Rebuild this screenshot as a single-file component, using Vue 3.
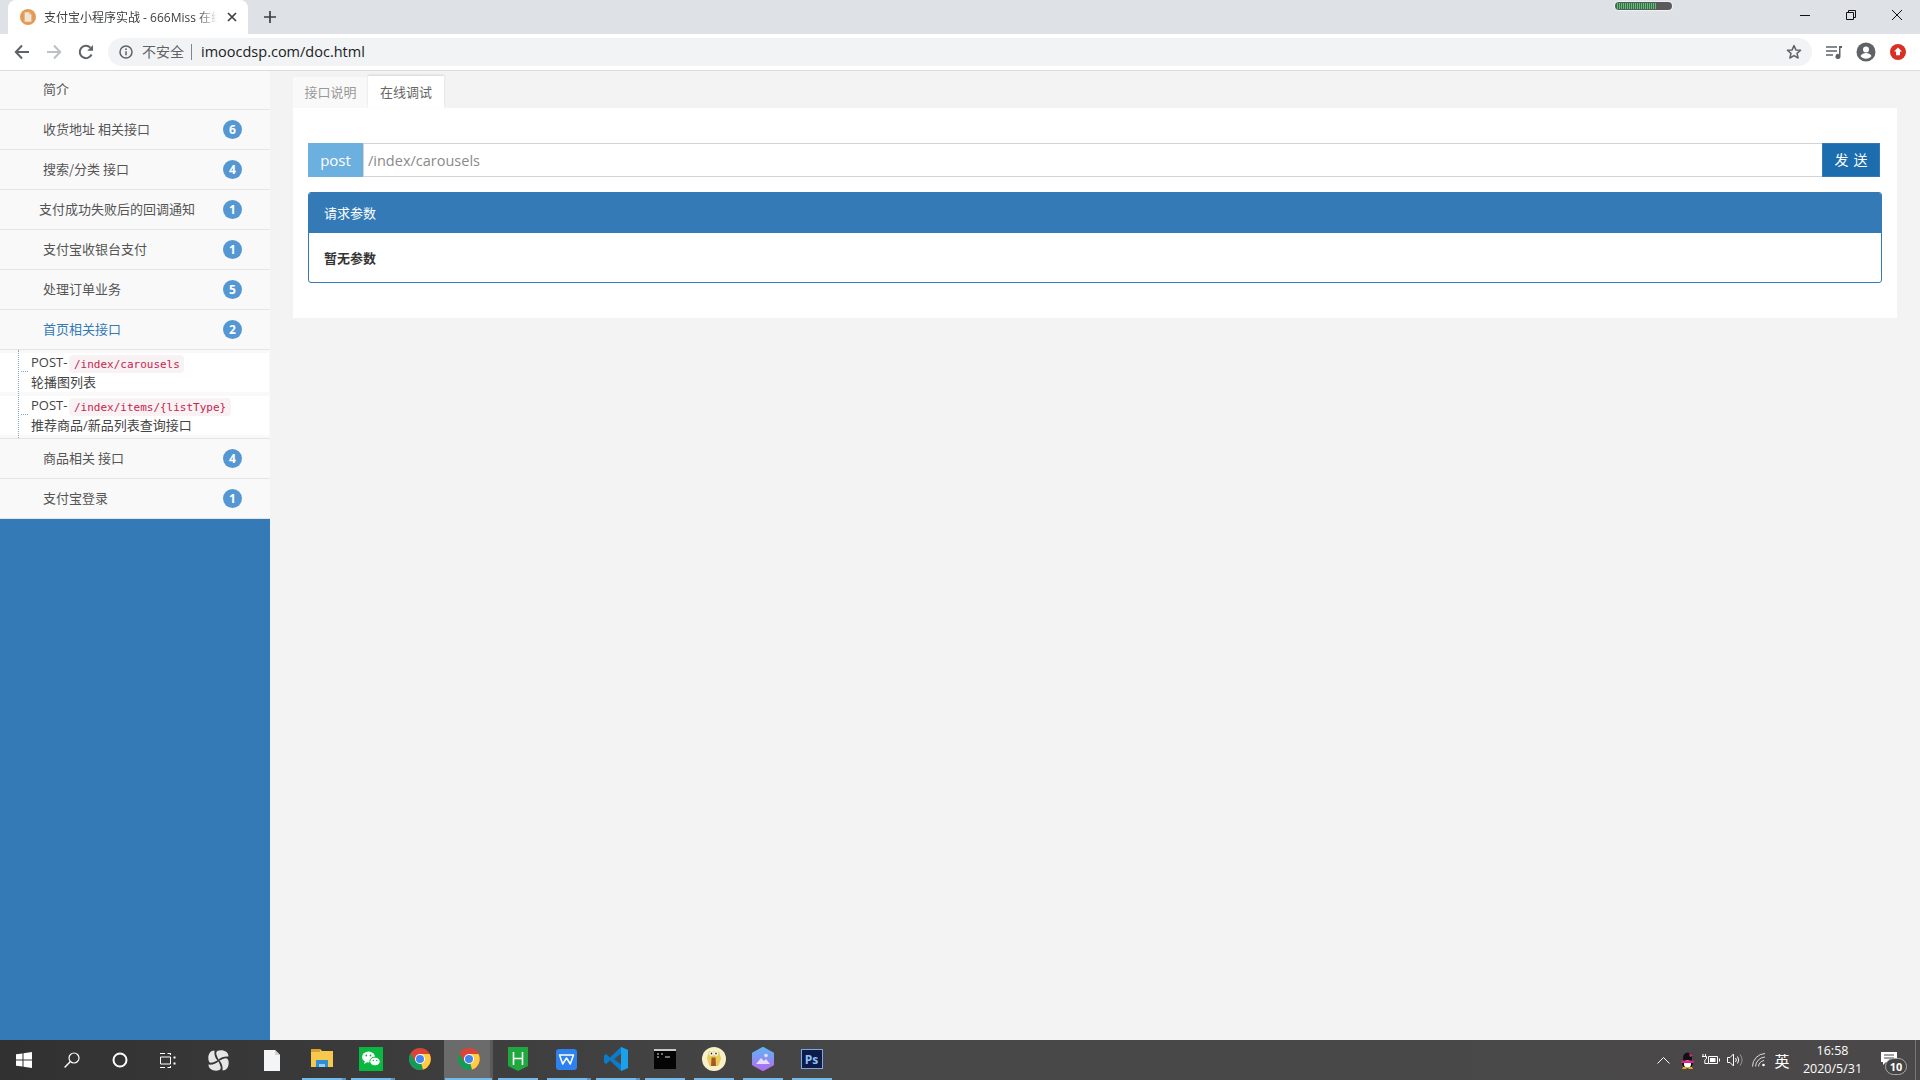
<script setup>
const groupsBefore = [
  { name: '简介' },
  { name: '收货地址 相关接口', count: 6 },
  { name: '搜索/分类 接口', count: 4 },
  { name: '支付成功失败后的回调通知', count: 1, wide: true },
  { name: '支付宝收银台支付', count: 1 },
  { name: '处理订单业务', count: 5 },
  { name: '首页相关接口', count: 2, active: true },
]
const subItems = [
  { path: '/index/carousels', desc: '轮播图列表' },
  { path: '/index/items/{listType}', desc: '推荐商品/新品列表查询接口' },
]
const groupsAfter = [
  { name: '商品相关 接口', count: 4 },
  { name: '支付宝登录', count: 1 },
]
const meterBars = Array.from({ length: 20 }, (_, i) => i)
const petalAngles = [0, 90, 180, 270]
</script>

<template>
  <div class="screen">
    <header class="browser">
      <div class="tabstrip">
        <div class="tab">
          <span class="favicon">
            <svg width="16" height="16" viewBox="0 0 16 16"><circle cx="8" cy="8" r="8" fill="#e59a55"/><path d="M4.600 3.200h4.600l2.200 2.200v7.400H4.600z" fill="#efe6d6"/><path d="M9.200 3.200v2.200h2.200z" fill="#cdbfa6"/></svg>
          </span>
          <span class="tab-title">支付宝小程序实战 - 666Miss 在线</span>
          <svg class="tab-close" width="10" height="10" viewBox="0 0 10 10"><path d="M1 1l8 8M9 1l-8 8" stroke="#3c4043" stroke-width="1.700" fill="none"/></svg>
        </div>
        <svg class="newtab" width="14" height="14" viewBox="0 0 14 14"><path d="M7 1v12M1 7h12" stroke="#3c4043" stroke-width="1.700" fill="none"/></svg>
        <div class="winctrl">
          <span class="wbtn"><svg width="12" height="12" viewBox="0 0 12 12"><path d="M1 6.500h10" stroke="#111" stroke-width="1" fill="none"/></svg></span>
          <span class="wbtn"><svg width="12" height="12" viewBox="0 0 12 12"><path d="M1.500 3.500h7v7h-7zM3.500 3.500v-2h7v7h-2" stroke="#111" stroke-width="1" fill="none"/></svg></span>
          <span class="wbtn"><svg width="12" height="12" viewBox="0 0 12 12"><path d="M1 1l10 10M11 1L1 11" stroke="#111" stroke-width="1" fill="none"/></svg></span>
        </div>
        <div class="meter"><i v-for="b in meterBars" :key="b"></i></div>
      </div>
      <div class="toolbar">
        <span class="nav"><svg width="16" height="16" viewBox="0 0 16 16"><path d="M15 8H2M8 1.500L1.800 8 8 14.500" stroke="#5f6368" stroke-width="2" fill="none"/></svg></span>
        <span class="nav"><svg width="16" height="16" viewBox="0 0 16 16"><path d="M1 8h13M8 1.500L14.200 8 8 14.500" stroke="#bdc1c6" stroke-width="2" fill="none"/></svg></span>
        <span class="nav"><svg width="16" height="16" viewBox="0 0 16 16"><path d="M13.600 10.500A6.200 6.200 0 1 1 12.400 3.600" stroke="#5f6368" stroke-width="2" fill="none"/><path d="M15 1v5.800H9.200z" fill="#5f6368"/></svg></span>
        <div class="omnibox">
          <svg class="info" width="14" height="14" viewBox="0 0 14 14"><circle cx="7" cy="7" r="6" stroke="#5f6368" stroke-width="1.500" fill="none"/><path d="M7 6.200v4" stroke="#5f6368" stroke-width="1.500"/><circle cx="7" cy="4.200" r="0.900" fill="#5f6368"/></svg>
          <span class="insecure">不安全</span>
          <span class="omni-sep"></span>
          <span class="url">imoocdsp.com/doc.html</span>
          <svg class="star" width="16" height="16" viewBox="0 0 16 16"><path d="M8 1.600l1.900 4.300 4.700.4-3.600 3.100 1.100 4.600L8 11.600 3.900 14l1.100-4.600L1.400 6.300l4.700-.4z" stroke="#5f6368" stroke-width="1.500" fill="none" stroke-linejoin="round"/></svg>
        </div>
        <span class="ext ext-queue"><svg width="16" height="14" viewBox="0 0 16 14"><path d="M0 2h11M0 6h11M0 10h7" stroke="#5f6368" stroke-width="1.500" fill="none"/><path d="M13 1h3v2h-1.500v8.500a2.500 2.500 0 1 1-1.500-2.300z" fill="#5f6368"/></svg></span>
        <span class="ext"><svg width="20" height="20" viewBox="0 0 20 20"><circle cx="10" cy="10" r="9.500" fill="#5f6368"/><circle cx="10" cy="7.500" r="3" fill="#fff"/><path d="M4.500 14c1-2 3.300-3 5.500-3s4.500 1 5.500 3c-1.300 1.700-3.300 2.700-5.500 2.700S5.800 15.700 4.500 14z" fill="#fff"/></svg></span>
        <span class="ext"><svg width="16" height="16" viewBox="0 0 16 16"><circle cx="8" cy="8" r="8" fill="#d93025"/><path d="M8 3.400l4 4.200H10v3.600H6V7.600H4z" fill="#fff"/></svg></span>
      </div>
    </header>

    <div class="page">
      <aside class="sidebar">
        <div v-for="g in groupsBefore" :key="g.name" class="group" :class="{ active: g.active }">
          <span class="group-name" :class="{ wide: g.wide }">{{ g.name }}</span>
          <span v-if="g.count" class="badge">{{ g.count }}</span>
        </div>
        <div class="subs">
          <div v-for="s in subItems" :key="s.path" class="sub">
            <div class="sub-line">POST-<code class="path">{{ s.path }}</code></div>
            <div class="sub-line">{{ s.desc }}</div>
          </div>
        </div>
        <div v-for="g in groupsAfter" :key="g.name" class="group">
          <span class="group-name">{{ g.name }}</span>
          <span class="badge">{{ g.count }}</span>
        </div>
      </aside>

      <main class="content">
        <div class="tabs">
          <span class="dtab">接口说明</span>
          <span class="dtab current">在线调试</span>
        </div>
        <section class="panel">
          <div class="request">
            <span class="method">post</span>
            <span class="address">/index/carousels</span>
            <button class="send">发 送</button>
          </div>
          <div class="params">
            <div class="params-head"><span class="head-text">请求参数</span></div>
            <div class="params-body">暂无参数</div>
          </div>
        </section>
      </main>
    </div>

    <footer class="taskbar">
      <div class="sys">
        <span class="ti"><svg width="16" height="16" viewBox="0 0 16 16"><path d="M0 2.300L6.500 1.400V7.500H0zM7.500 1.200L16 0V7.500H7.500zM0 8.500H6.500V14.600L0 13.700zM7.500 8.500H16V16L7.500 14.800z" fill="#fff"/></svg></span>
        <span class="ti"><svg width="16" height="16" viewBox="0 0 16 16"><circle cx="10" cy="6" r="5" stroke="#fff" stroke-width="1.200" fill="none"/><path d="M6.400 9.600L.6 15.400" stroke="#fff" stroke-width="1.400"/></svg></span>
        <span class="ti"><svg width="16" height="16" viewBox="0 0 16 16"><circle cx="8" cy="8" r="6.500" stroke="#fff" stroke-width="2" fill="none"/></svg></span>
        <span class="ti"><svg width="16" height="15" viewBox="0 0 16 15"><path d="M0 .5h5M7.500 .5h3M0 14.500h5M7.500 14.500h3M.5 4h10v7H.5z" stroke="#fff" stroke-width="1" fill="none"/><path d="M13.500 3.500h2v2h-2zM13.500 9.500h2v2h-2z" fill="#fff"/><path d="M10.500 0v2M10.500 13v2" stroke="#fff" stroke-width="1"/></svg></span>
        <span class="ti fan"><svg width="21" height="21" viewBox="0 0 21 21"><path v-for="a in petalAngles" :key="a" d="M10.500 9.500C9.500 7 8.200 5 8.200 3C8.200 1 10.500 .3 13 .3C17 .3 20.500 2.500 20.500 6.500C17 6 13 7 10.500 9.500z" fill="#e6e6e6" :transform="`rotate(${a} 10.500 10.500)`"/></svg></span>
        <span class="ti file"><svg width="16" height="21" viewBox="0 0 16 21"><path d="M0 0h11l5 5v16H0z" fill="#f4f5f7"/><path d="M11 0v5h5z" fill="#cfd3d8"/></svg></span>
      </div>

      <div class="apps">
        <span class="app on split"><svg width="22" height="20" viewBox="0 0 22 20"><path d="M0 0h9l2 2h11v16H0z" fill="#f6c94e"/><path d="M0 0h9v3H0z" fill="#d9a22e"/><path d="M5 11h12v7h-3v-3H8v3H5z" fill="#2e8fd6"/><path d="M8 15h6v3H8z" fill="#8fd0f5"/></svg></span>
        <span class="app on split"><svg width="24" height="24" viewBox="0 0 24 24"><rect width="24" height="24" fill="#09b83e"/><ellipse cx="9.500" cy="10" rx="6.500" ry="5.400" fill="#fff"/><path d="M6 14l-1 3 3.500-2z" fill="#fff"/><ellipse cx="16" cy="14.500" rx="5.200" ry="4.400" fill="#fff" stroke="#09b83e" stroke-width="1"/><circle cx="7.300" cy="8.500" r=".9" fill="#09b83e"/><circle cx="11.500" cy="8.500" r=".9" fill="#09b83e"/><circle cx="14.300" cy="13.500" r=".7" fill="#09b83e"/><circle cx="17.700" cy="13.500" r=".7" fill="#09b83e"/></svg></span>
        <span class="app">
          <svg width="22" height="22" viewBox="0 0 22 22"><circle cx="11" cy="11" r="11" fill="#db4437"/><path d="M11 11L1.500 16.500A11 11 0 0 0 11 22c1 0 2-.1 3-.4z" fill="#0f9d58"/><path d="M11 6h9.500A11 11 0 0 1 14 21.600L11 11z" fill="#ffcd40"/><path d="M1.500 5.500L6.300 13.700 1.500 16.500A11 11 0 0 1 1.500 5.500z" fill="#0f9d58"/><circle cx="11" cy="11" r="5" fill="#fff"/><circle cx="11" cy="11" r="4" fill="#4285f4"/></svg>
        </span>
        <span class="app on current-app">
          <svg width="22" height="22" viewBox="0 0 22 22"><circle cx="11" cy="11" r="11" fill="#db4437"/><path d="M11 11L1.500 16.500A11 11 0 0 0 11 22c1 0 2-.1 3-.4z" fill="#0f9d58"/><path d="M11 6h9.500A11 11 0 0 1 14 21.600L11 11z" fill="#ffcd40"/><path d="M1.500 5.500L6.300 13.700 1.500 16.500A11 11 0 0 1 1.500 5.500z" fill="#0f9d58"/><circle cx="11" cy="11" r="5" fill="#fff"/><circle cx="11" cy="11" r="4" fill="#4285f4"/></svg>
        </span>
        <span class="app on"><svg width="20" height="24" viewBox="0 0 20 24"><path d="M0 0h20v19l-10 5-10-5z" fill="#1fa83e"/><path d="M5.500 5v13M14.500 5v13M5.500 11.500h9" stroke="#fff" stroke-width="1.600" fill="none"/></svg></span>
        <span class="app on split"><svg width="21" height="21" viewBox="0 0 21 21"><rect width="21" height="21" rx="3" fill="#2d82ef"/><path d="M3.500 6h14l-3.200 9-3.800-6-3.800 6z" stroke="#fff" stroke-width="1.500" fill="none" stroke-linejoin="round"/></svg></span>
        <span class="app on split"><svg width="24" height="24" viewBox="0 0 24 24"><path d="M17 0l7 3v18l-7 3-11-10.500L2 17l-2-1.500v-7L2 7l4 3.500z" fill="#0a7ccb"/><path d="M17 0l7 3v18l-7 3z" fill="#1ba0ea"/><path d="M17 6.500v11L10 12z" fill="#484848"/></svg></span>
        <span class="app on"><svg width="22" height="20" viewBox="0 0 22 20"><rect width="22" height="20" fill="#050505"/><rect width="22" height="2" fill="#c9c9c9"/><path d="M3 5h2M3 8h2M7 5h2M11 8h5" stroke="#ddd" stroke-width="1.200"/></svg></span>
        <span class="app on"><svg width="24" height="24" viewBox="0 0 24 24"><circle cx="12" cy="12" r="12" fill="#f8f0c8"/><path d="M7 4l10 .5 2 7-2.500 7.500h-9L5 11.500z" fill="#e8cc58"/><circle cx="9.500" cy="6.500" r="2.200" fill="#fff"/><circle cx="14" cy="6.500" r="2.200" fill="#fff"/><circle cx="9.500" cy="6.500" r=".9" fill="#333"/><circle cx="14" cy="6.500" r=".9" fill="#333"/><path d="M9.500 10.500h4l.5 8.500h-5z" fill="#a8562c"/></svg></span>
        <span class="app on"><svg width="22" height="24" viewBox="0 0 22 24"><defs><linearGradient id="photo" x1="0" y1="0" x2="0" y2="1"><stop offset="0" stop-color="#5fb4f5"/><stop offset="1" stop-color="#b26cf0"/></linearGradient></defs><path d="M11 1l10 5.500v11L11 23 1 17.500v-11z" fill="url(#photo)" stroke="url(#photo)" stroke-width="2" stroke-linejoin="round"/><circle cx="14" cy="8.500" r="1.800" fill="#e6ddff"/><path d="M4 17l5-6 3 3 2-2 4 5z" fill="#e6ddff"/></svg></span>
        <span class="app on"><span class="ps">Ps</span></span>
      </div>

      <div class="tray">
        <span class="tr w24"><svg width="13" height="8" viewBox="0 0 13 8"><path d="M.5 7.500l6-6 6 6" stroke="#fff" stroke-width="1" fill="none"/></svg></span>
        <span class="tr w24"><svg width="15" height="17" viewBox="0 0 15 17"><ellipse cx="7.500" cy="6" rx="4.500" ry="5.500" fill="#111"/><ellipse cx="7.500" cy="11" rx="5.500" ry="5" fill="#111"/><ellipse cx="7.500" cy="12" rx="3.500" ry="3.800" fill="#fff"/><path d="M1.500 8.500h12v2.500h-12z" fill="#e8208c"/><path d="M9 1.500l4 2-3 1.500z" fill="#e8208c"/><path d="M3 15h3.500v2H2zM8.500 15H12l1 2H8.500z" fill="#f0a30a"/></svg></span>
        <span class="tr w24"><svg width="18" height="12" viewBox="0 0 18 12"><path d="M6.500 2.500h9v7h-9z" stroke="#fff" stroke-width="1" fill="none"/><path d="M8 4h5.500v4H8zM17 4.500h1v3h-1z" fill="#fff"/><path d="M1 0v2.500M3.500 0v2.500M0 2.500h4.500v2L2.800 6v3.500H6" stroke="#fff" stroke-width="1" fill="none"/></svg></span>
        <span class="tr w24"><svg width="16" height="14" viewBox="0 0 16 14"><path d="M.5 4.500h2.500L6.500 1v12L3 9.500H.5z" stroke="#fff" stroke-width="1" fill="none"/><path d="M8.500 5a3 3 0 0 1 0 4M10.500 3.500a6 6 0 0 1 0 7" stroke="#fff" stroke-width="1" fill="none"/><path d="M13 1.500a9 9 0 0 1 0 11" stroke="#999" stroke-width="1" fill="none"/></svg></span>
        <span class="tr w24"><svg width="14" height="14" viewBox="0 0 14 14"><path d="M.5 13.500A13 13 0 0 1 13 .5M3.500 13.500A10 10 0 0 1 13 4M6.500 13.500A7 7 0 0 1 12 7.500" stroke="#ddd" stroke-width="1" fill="none"/><circle cx="11.500" cy="12" r="1.300" fill="#fff"/></svg></span>
        <span class="tr ime">英</span>
        <span class="clock"><span>16:58</span><span>2020/5/31</span></span>
        <span class="notify">
          <svg width="16" height="13" viewBox="0 0 16 13"><path d="M0 0h16v10H5l-3 3v-3H0z" fill="#fff"/><path d="M3 3h10M3 6h10" stroke="#444" stroke-width="1"/></svg>
          <span class="notify-count">10</span>
        </span>
        <span class="desktop"></span>
      </div>
    </footer>
  </div>
</template>

<style scoped>
.screen {
  width: 1920px;
  height: 1080px;
  display: flex;
  flex-direction: column;
  overflow: hidden;
  font-family: "Noto Sans CJK SC", "Noto Sans", sans-serif;
  background: #f3f3f3;
}
.browser { flex: none; }
.tabstrip {
  height: 34px;
  background: #dee1e6;
  display: flex;
  align-items: flex-end;
  padding-left: 8px;
  position: relative;
}
.tab {
  width: 240px;
  height: 34px;
  background: #fff;
  border-radius: 8px 8px 0 0;
  display: flex;
  align-items: center;
  padding: 0 10px 0 12px;
  box-sizing: border-box;
}
.favicon { width: 16px; height: 16px; margin-right: 8px; flex: none; }
.favicon svg { display: block; }
.tab-title {
  width: 174px;
  overflow: hidden;
  white-space: nowrap;
  font-family: "Open Sans", "Noto Sans CJK SC", sans-serif;
  font-size: 12px;
  color: #3c4043;
  -webkit-mask-image: linear-gradient(to right, #000 88%, transparent 100%);
  mask-image: linear-gradient(to right, #000 88%, transparent 100%);
}
.tab-close { margin-left: 9px; flex: none; }
.newtab { margin: 0 0 10px 15px; flex: none; }
.winctrl { margin-left: auto; display: flex; height: 34px; align-self: flex-start; }
.wbtn { width: 46px; height: 29px; display: flex; align-items: center; justify-content: center; }
.meter {
  position: absolute;
  left: 1615px;
  top: 2px;
  width: 57px;
  height: 8px;
  box-sizing: border-box;
  border-radius: 4px;
  background: #5a5a5a;
  box-shadow: 0 0 1px 1px rgba(255, 255, 255, 0.6);
  display: flex;
  gap: 1px;
  padding: 1px 2px;
}
.meter i { width: 1px; background: #44d06a; }
.toolbar {
  height: 37px;
  box-sizing: border-box;
  background: #fff;
  border-bottom: 1px solid #dadce0;
  display: flex;
  align-items: flex-start;
  padding: 4px 0 0 6px;
}
.nav { width: 32px; height: 28px; display: flex; align-items: center; justify-content: center; flex: none; }
.omnibox {
  width: 1704px;
  margin-left: 6px;
  height: 28px;
  box-sizing: border-box;
  border-radius: 14px;
  background: #f1f3f4;
  display: flex;
  align-items: center;
  padding-left: 11px;
  flex: none;
}
.info { flex: none; }
.insecure { margin-left: 9px; font-size: 14px; color: #5f6368; padding-bottom: 2px; }
.omni-sep { width: 1px; height: 16px; background: #80868b; margin: 0 9px 0 7px; }
.url { font-family: "Open Sans", "Noto Sans", sans-serif; font-size: 14.5px; color: #202124; padding-bottom: 2px; }
.star { margin-left: auto; margin-right: 10px; flex: none; }
.ext { width: 32px; height: 28px; display: flex; align-items: center; justify-content: center; flex: none; }
.ext-queue { margin-left: 6px; }

.page { flex: 1; display: flex; min-height: 0; }
.sidebar { width: 270px; flex: none; background: #337ab7; }
.group {
  height: 40px;
  box-sizing: border-box;
  background: #f9f9f9;
  border-bottom: 1px solid #e5e5e5;
  display: flex;
  align-items: center;
  padding: 0 28px 0 43px;
  font-size: 13px;
  color: #555;
}
.group:first-child { height: 39px; }
.group.active { color: #337ab7; }
.group-name { padding-bottom: 3px; }
.group-name.wide { margin-left: -4px; }
.badge {
  margin-left: auto;
  width: 19px;
  height: 19px;
  border-radius: 50%;
  background: #5497d3;
  color: #fff;
  font-family: "Open Sans", sans-serif;
  font-size: 12px;
  font-weight: 700;
  display: flex;
  align-items: center;
  justify-content: center;
}
.subs {
  position: relative;
  height: 89px;
  box-sizing: border-box;
  background: #f9f9f9;
  padding-top: 3px;
  border-bottom: 1px solid #e5e5e5;
  display: flex;
  flex-direction: column;
  gap: 4px;
}
.subs::after {
  content: "";
  position: absolute;
  z-index: 1;
  left: 18px;
  top: 0;
  bottom: 0;
  border-left: 1px dotted #7fa8cc;
}
.sub {
  position: relative;
  height: 39px;
  width: 269px;
  box-sizing: border-box;
  background: #fff;
  padding-left: 31px;
  font-family: "Open Sans", "Noto Sans CJK SC", sans-serif;
  font-size: 13px;
  color: #444;
}
.sub::before {
  content: "";
  position: absolute;
  left: 21px;
  top: 18px;
  width: 7px;
  border-top: 1px dotted #7fa8cc;
}
.sub-line { height: 20px; line-height: 19px; white-space: nowrap; }
.path {
  font-family: "DejaVu Sans Mono", monospace;
  font-size: 11px;
  color: #c7254e;
  background: #f9f2f4;
  border-radius: 4px;
  padding: 2.5px 4.5px;
  margin-left: 2px;
}

.content { flex: 1; padding: 5px 23px 0; min-width: 0; }
.tabs { display: flex; align-items: flex-end; height: 32px; }
.dtab {
  height: 31px;
  width: 75px;
  box-sizing: border-box;
  padding-bottom: 2px;
  background: #f9f9f9;
  color: #999;
  font-size: 13px;
  display: flex;
  align-items: center;
  justify-content: center;
}
.dtab.current {
  height: 32px;
  width: 76px;
  background: #fff;
  color: #666;
  box-shadow: 0 -1px 2px rgba(0, 0, 0, 0.12);
}
.panel { background: #fff; padding: 35px 15px; height: 210px; box-sizing: border-box; }
.request { display: flex; height: 34px; margin-right: 2px; }
.method {
  width: 55px;
  background: #6cb0e0;
  color: #fff;
  font-family: "Open Sans", sans-serif;
  font-size: 15px;
  font-weight: 500;
  display: flex;
  align-items: center;
  justify-content: center;
  flex: none;
}
.address {
  flex: 1;
  box-sizing: border-box;
  border: 1px solid #d3d3d3;
  border-width: 1px 0 1px 1px;
  padding-left: 4px;
  font-family: "Open Sans", sans-serif;
  font-size: 14.5px;
  color: #8a8a8a;
  display: flex;
  align-items: center;
}
.send {
  width: 58px;
  box-sizing: border-box;
  border: 1px solid #337ab7;
  background: #1b6dad;
  color: #fff;
  font-family: inherit;
  font-size: 14px;
  word-spacing: 2px;
  padding: 0 0 2px;
}
.params { margin-top: 15px; border: 1px solid #337ab7; border-radius: 3px; overflow: hidden; }
.params-head {
  height: 40px;
  background: #337ab7;
  color: #fff;
  font-size: 13px;
  display: flex;
  align-items: center;
  padding-left: 15px;
}
.head-text { padding-bottom: 2px; }
.params-body {
  height: 49px;
  box-sizing: border-box;
  padding: 0 0 1px 15px;
  font-size: 13px;
  font-weight: 700;
  color: #333;
  display: flex;
  align-items: center;
}

.taskbar {
  height: 40px;
  flex: none;
  display: flex;
  background: linear-gradient(to right, #313131 0%, #484848 45%, #4a4848 100%);
  color: #fff;
}
.sys { display: flex; flex: none; }
.ti { width: 48px; height: 40px; display: flex; align-items: center; justify-content: center; box-sizing: border-box; }
.ti.fan { width: 52px; }
.ti.file { width: 53px; padding-left: 2px; }
.apps { display: flex; flex: none; }
.app {
  position: relative;
  width: 49px;
  height: 40px;
  display: flex;
  align-items: center;
  justify-content: center;
  box-sizing: border-box;
  padding-bottom: 2px;
}
.app.on::after {
  content: "";
  position: absolute;
  left: 5px;
  width: 40px;
  bottom: 0;
  height: 2px;
  background: #76b9ed;
}
.app.split::before {
  content: "";
  position: absolute;
  left: 45px;
  width: 4px;
  bottom: 0;
  height: 2px;
  background: #5b93c0;
  z-index: 1;
}
.current-app { background: #6b6b6b; border-right: 3px solid #5a5a5a; padding-left: 3px; }
.current-app.on::after { left: 1px; width: 47px; }
.ps {
  width: 22px;
  height: 20px;
  box-sizing: border-box;
  background: #0d1a4a;
  border: 1px solid #7fa8e0;
  color: #8fc1f2;
  font-family: "Open Sans", sans-serif;
  font-size: 12px;
  font-weight: 700;
  display: flex;
  align-items: center;
  justify-content: center;
}
.tray { margin-left: auto; display: flex; align-items: center; height: 40px; }
.tr { height: 40px; display: flex; align-items: center; justify-content: center; }
.w24 { width: 24px; }
.ime { width: 22px; font-size: 15px; }
.clock {
  width: 83px;
  display: flex;
  flex-direction: column;
  align-items: center;
  font-family: "Open Sans", sans-serif;
  font-size: 12.500px;
  line-height: 18px;
  margin: 0 2px 0 -2px;
}
.notify {
  position: relative;
  width: 39px;
  height: 40px;
  display: flex;
  align-items: center;
  padding: 0 0 4px 5px;
  box-sizing: border-box;
}
.notify-count {
  position: absolute;
  top: 18px;
  left: 9px;
  height: 17px;
  width: 22px;
  box-sizing: border-box;
  border: 1px solid #aaa;
  border-radius: 9px;
  background: #444;
  font-family: "Open Sans", sans-serif;
  font-size: 11px;
  font-weight: 700;
  line-height: 15px;
  text-align: center;
}
.desktop { width: 5px; height: 40px; border-left: 1px solid #777; box-sizing: border-box; }
</style>
